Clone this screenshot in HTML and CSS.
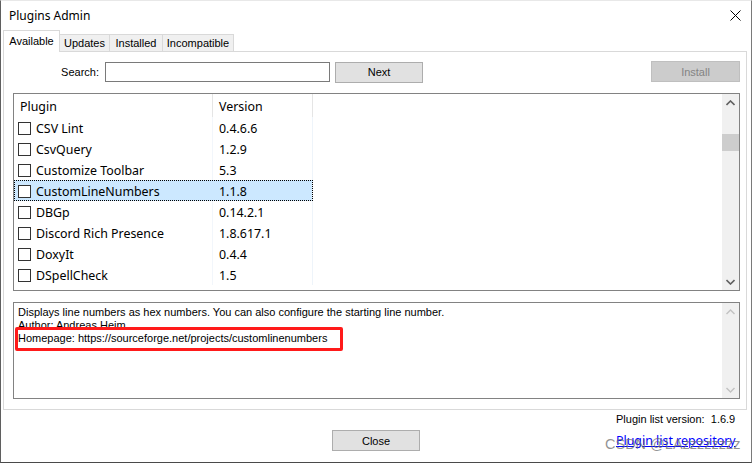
FILE: index.html
```html
<!DOCTYPE html>
<html>
<head>
<meta charset="utf-8">
<link rel="stylesheet" href="styles.css">
</head>
<body>
<div class="window">
  <div class="titlebar">
    <span class="title">Plugins Admin</span>
    <svg class="close-x" width="11" height="11" viewBox="0 0 11 11"><path d="M0.5 0.5 L10.5 10.5 M10.5 0.5 L0.5 10.5" stroke="#000" stroke-width="1" fill="none"/></svg>
  </div>
  <div class="tabs">
    <div class="tab active">Available</div>
    <div class="tab t2">Updates</div>
    <div class="tab t3">Installed</div>
    <div class="tab t4">Incompatible</div>
  </div>
  <div class="panel">
    <div class="search-row">
      <span class="search-label">Search:</span>
      <div class="search-input"></div>
      <div class="btn next">Next</div>
      <div class="spacer"></div>
      <div class="btn install">Install</div>
    </div>
    <div class="list">
      <div class="list-body">
        <div class="row header"><div class="c1">Plugin</div><div class="c2">Version</div><div class="c3"></div></div>
        <div class="row"><div class="c1"><span class="cb"></span>CSV Lint</div><div class="c2">0.4.6.6</div><div class="c3"></div></div>
        <div class="row"><div class="c1"><span class="cb"></span>CsvQuery</div><div class="c2">1.2.9</div><div class="c3"></div></div>
        <div class="row"><div class="c1"><span class="cb"></span>Customize Toolbar</div><div class="c2">5.3</div><div class="c3"></div></div>
        <div class="row selected"><div class="sel"><div class="c1"><span class="cb"></span>CustomLineNumbers</div><div class="c2">1.1.8</div></div><div class="c3"></div></div>
        <div class="row"><div class="c1"><span class="cb"></span>DBGp</div><div class="c2">0.14.2.1</div><div class="c3"></div></div>
        <div class="row"><div class="c1"><span class="cb"></span>Discord Rich Presence</div><div class="c2">1.8.617.1</div><div class="c3"></div></div>
        <div class="row"><div class="c1"><span class="cb"></span>DoxyIt</div><div class="c2">0.4.4</div><div class="c3"></div></div>
        <div class="row"><div class="c1"><span class="cb"></span>DSpellCheck</div><div class="c2">1.5</div><div class="c3"></div></div>
      </div>
      <div class="vscroll">
        <svg class="arrow" width="9" height="6" viewBox="0 0 9 6"><path d="M0.5 5 L4.5 1 L8.5 5" stroke="#606060" stroke-width="1.6" fill="none"/></svg>
        <div class="track"><div class="thumb"></div></div>
        <svg class="arrow" width="9" height="6" viewBox="0 0 9 6"><path d="M0.5 1 L4.5 5 L8.5 1" stroke="#606060" stroke-width="1.6" fill="none"/></svg>
      </div>
    </div>
    <div class="desc">
      <div class="desc-text">
        <div>Displays line numbers as hex numbers. You can also configure the starting line number.</div>
        <div>Author: Andreas Heim</div>
        <div>Homepage: https://sourceforge.net/projects/customlinenumbers</div>
      </div>
      <div class="vscroll disabled">
        <svg class="arrow" width="9" height="6" viewBox="0 0 9 6"><path d="M0.5 5 L4.5 1 L8.5 5" stroke="#c2c2c2" stroke-width="1.4" fill="none"/></svg>
        <div class="track"></div>
        <svg class="arrow" width="9" height="6" viewBox="0 0 9 6"><path d="M0.5 1 L4.5 5 L8.5 1" stroke="#c2c2c2" stroke-width="1.4" fill="none"/></svg>
      </div>
      <div class="highlight"></div>
    </div>
  </div>
  <div class="footer">
    <div class="f-left"></div>
    <div class="btn close">Close</div>
    <div class="f-right">
      <div class="ver">Plugin list version:&nbsp; 1.6.9</div>
      <div class="repo">Plugin list repository</div>
    </div>
    <div class="watermark">CSDN @LAzzzzzzzz</div>
  </div>
</div>
</body>
</html>
```
FILE: styles.css
```css
* { box-sizing: border-box; }
html, body { margin: 0; padding: 0; }
body {
  width: 752px;
  height: 463px;
  background: #3c3c3c;
  font-family: "Liberation Sans", Arial, sans-serif;
  font-size: 11px;
  color: #000;
  overflow: hidden;
}
.window {
  width: 752px;
  height: 463px;
  background: #fff;
  border-left: 1px solid #5f5f5f;
  border-right: 1px solid #7a7a7a;
  border-bottom: 1px solid #4a4a4a;
  border-top: 1px solid #e8e8e8;
  position: relative;
}
.titlebar {
  height: 29px;
  display: flex;
  align-items: center;
  justify-content: space-between;
  padding: 0 10px 0 8px;
}
.title { font-family: "Noto Sans", sans-serif; font-size: 12px; }

.tabs {
  display: flex;
  align-items: flex-end;
  height: 21px;
  padding-left: 2px;
  position: relative;
  z-index: 2;
}
.tab {
  flex: none;
  height: 17px;
  background: #f0f0f0;
  border: 1px solid #d9d9d9;
  border-bottom: none;
  border-left: none;
  line-height: 16px;
  text-align: center;
}
.tab.active {
  height: 22px;
  margin-bottom: -1px;
  background: #fff;
  border-left: 1px solid #d9d9d9;
  line-height: 20px;
  width: 57px;
}
.t2 { width: 50px; }
.t3 { width: 53px; }
.t4 { width: 71px; }

.panel {
  margin-left: 2px;
  width: 744px;
  height: 359px;
  border: 1px solid #d9d9d9;
  padding: 10px 6px 0 9px;
}
.search-row {
  display: flex;
  align-items: center;
  height: 20px;
}
.search-label { width: 92px; text-align: right; padding-right: 6px; }
.search-input {
  width: 225px;
  height: 20px;
  border: 1px solid #7a7a7a;
  background: #fff;
}
.btn {
  height: 21px;
  border: 1px solid #adadad;
  background: #e1e1e1;
  display: flex;
  align-items: center;
  justify-content: center;
}
.next { width: 88px; margin-left: 5px; }
.spacer { flex: 1; }
.install {
  width: 89px;
  background: #cccccc;
  border-color: #bfbfbf;
  color: #838383;
  margin-top: -1px;
}

.list {
  margin-top: 11px;
  height: 198px;
  border: 1px solid #828282;
  display: flex;
  font-family: "Noto Sans", sans-serif;
  font-size: 12.4px;
}
.list-body { flex: 1; }
.row {
  display: flex;
  height: 21px;
  align-items: stretch;
}
.row.header { height: 23px; }
.row > div, .sel > div {
  display: flex;
  align-items: center;
  padding-top: 1px;
}
.c1 { width: 199px; padding-left: 4px; border-right: 1px solid #f2f6fb; }
.c2 { width: 100px; padding-left: 6px; border-right: 1px solid #eef4fa; }
.c3 { flex: 1; }
.row.header .c1, .row.header .c2 { border-right-color: #e5e5e5; }
.row.header .c1 { padding-left: 6px; }
.row > .sel { padding-top: 0; }
.sel {
  display: flex;
  background: #cce8ff;
  outline: 1px dotted #000;
  outline-offset: -1px;
}
.sel .c1 { border-right-color: #cce8ff; }
.cb {
  width: 13px;
  height: 13px;
  border: 1px solid #333;
  background: #fff;
  margin-right: 5px;
  flex: none;
}

.vscroll {
  width: 17px;
  background: #f0f0f0;
  display: flex;
  flex-direction: column;
  align-items: center;
}
.vscroll .arrow { margin: 6px 0 5px; flex: none; }
.vscroll .track { flex: 1; width: 100%; padding-top: 23px; }
.vscroll .thumb { height: 17px; width: 100%; background: #cdcdcd; }

.desc {
  margin-top: 11px;
  height: 97px;
  border: 1px solid #828282;
  display: flex;
  position: relative;
}
.desc-text {
  flex: 1;
  padding: 3px 0 0 4px;
  line-height: 13px;
}
.highlight {
  position: absolute;
  left: 1px;
  top: 24px;
  width: 328px;
  height: 24px;
  border: 3px solid #ff1a1a;
  border-radius: 2px;
}

.footer {
  display: grid;
  grid-template-columns: 331px 88px 1fr;
  height: 51px;
  position: relative;
}
.close { grid-column: 2; margin-top: 20px; height: 21px; }
.f-right {
  padding-left: 196px;
  padding-top: 2px;
  line-height: 14px;
}
.repo {
  font-family: "Noto Sans", sans-serif;
  font-size: 12.4px;
  color: #0000ff;
  text-decoration: underline;
  margin-top: 8px;
  white-space: nowrap;
}
.watermark {
  position: absolute;
  left: 604px;
  top: 26px;
  font-size: 14.5px;
  white-space: nowrap;
  color: rgba(105, 105, 105, 0.72);
  font-family: "Liberation Sans", sans-serif;
  z-index: 3;
}
```
